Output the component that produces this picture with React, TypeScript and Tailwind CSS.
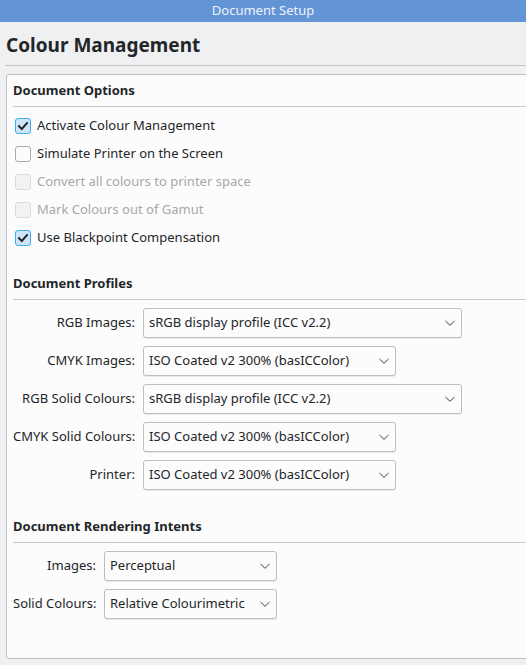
import React from 'react';

const FONT = { fontFamily: '"Noto Sans", "Open Sans", sans-serif' };

type CheckProps = { label: string; checked?: boolean; disabled?: boolean };

function Check({ label, checked, disabled }: CheckProps) {
  const box = disabled
    ? 'bg-[#f1f2f2] border-[#dadbdc]'
    : checked
      ? 'bg-[#cfe6f8] border-[#3daee9]'
      : 'bg-[#fcfcfc] border-[#a9aaab]';
  return (
    <div className="h-[28px] flex items-center pl-[2px] gap-[6px]">
      <span className={`w-[16px] h-[16px] rounded-[3px] border flex items-center justify-center ${box}`}>
        {checked && (
          <svg width="12" height="12" viewBox="0 0 12 12" fill="none">
            <path d="M2 6.2 L4.8 9 L10 3.2" stroke="#232629" strokeWidth="2" strokeLinecap="square" />
          </svg>
        )}
      </span>
      <span className={`text-[13px] ${disabled ? 'text-[#a6a8aa]' : 'text-[#232629]'}`}>{label}</span>
    </div>
  );
}

function SectionTitle({ children }: { children: React.ReactNode }) {
  return (
    <div className="h-[32px] flex items-center border-b border-[#c9cacb] text-[13px] font-bold text-[#232629]">
      {children}
    </div>
  );
}

function Combo({ value, width }: { value: string; width: string }) {
  return (
    <div
      className={`h-[30px] ${width} bg-[#fcfcfc] border border-[#bcbdbe] rounded-[3px] shadow-[0_1px_0_rgba(0,0,0,0.07)] flex items-center pl-[5px] pr-[5px] text-[13px] text-[#232629]`}
    >
      <span className="flex-1 whitespace-nowrap">{value}</span>
      <svg width="12" height="8" viewBox="0 0 12 8" fill="none">
        <path d="M1.5 2 L6 6.3 L10.5 2" stroke="#3b4045" strokeWidth="1" />
      </svg>
    </div>
  );
}

function Row({ label, value, labelW, width }: { label: string; value: string; labelW: string; width: string }) {
  return (
    <div className="flex items-center gap-[8px]">
      <span className={`${labelW} text-right whitespace-nowrap text-[13px] text-[#232629]`}>{label}</span>
      <Combo value={value} width={width} />
    </div>
  );
}

export default function App() {
  return (
    <div className="w-[526px] h-[665px] bg-[#eff0f1] overflow-hidden" style={FONT}>
      <div className="h-[22px] bg-[#6394d6] text-[#eef3fa] text-[13px] flex items-center justify-center">
        Document Setup
      </div>
      <div className="h-[43px] pt-[9px] pl-[6px] text-[19px] leading-[28px] font-bold text-[#232629]">
        Colour Management
      </div>
      <div className="ml-[5px] border-b border-[#c3c4c5]" />
      <div className="mt-[8px] ml-[6px] w-[540px] h-[585px] bg-[#fcfcfc] border border-[#bfc0c1] rounded-l-[3px] pl-[6px]">
        <SectionTitle>Document Options</SectionTitle>
        <div className="pt-[5px]">
          <Check label="Activate Colour Management" checked />
          <Check label="Simulate Printer on the Screen" />
          <Check label="Convert all colours to printer space" disabled />
          <Check label="Mark Colours out of Gamut" disabled />
          <Check label="Use Blackpoint Compensation" checked />
        </div>

        <div className="mt-[16px]">
          <SectionTitle>Document Profiles</SectionTitle>
        </div>
        <div className="pt-[8px] flex flex-col gap-[8px]">
          <Row label="RGB Images:" value="sRGB display profile (ICC v2.2)" labelW="w-[122px]" width="w-[319px]" />
          <Row label="CMYK Images:" value="ISO Coated v2 300% (basICColor)" labelW="w-[122px]" width="w-[253px]" />
          <Row label="RGB Solid Colours:" value="sRGB display profile (ICC v2.2)" labelW="w-[122px]" width="w-[319px]" />
          <Row label="CMYK Solid Colours:" value="ISO Coated v2 300% (basICColor)" labelW="w-[122px]" width="w-[253px]" />
          <Row label="Printer:" value="ISO Coated v2 300% (basICColor)" labelW="w-[122px]" width="w-[253px]" />
        </div>

        <div className="mt-[21px]">
          <SectionTitle>Document Rendering Intents</SectionTitle>
        </div>
        <div className="pt-[8px] flex flex-col gap-[8px]">
          <Row label="Images:" value="Perceptual" labelW="w-[83px]" width="w-[173px]" />
          <Row label="Solid Colours:" value="Relative Colourimetric" labelW="w-[83px]" width="w-[173px]" />
        </div>
      </div>
    </div>
  );
}
